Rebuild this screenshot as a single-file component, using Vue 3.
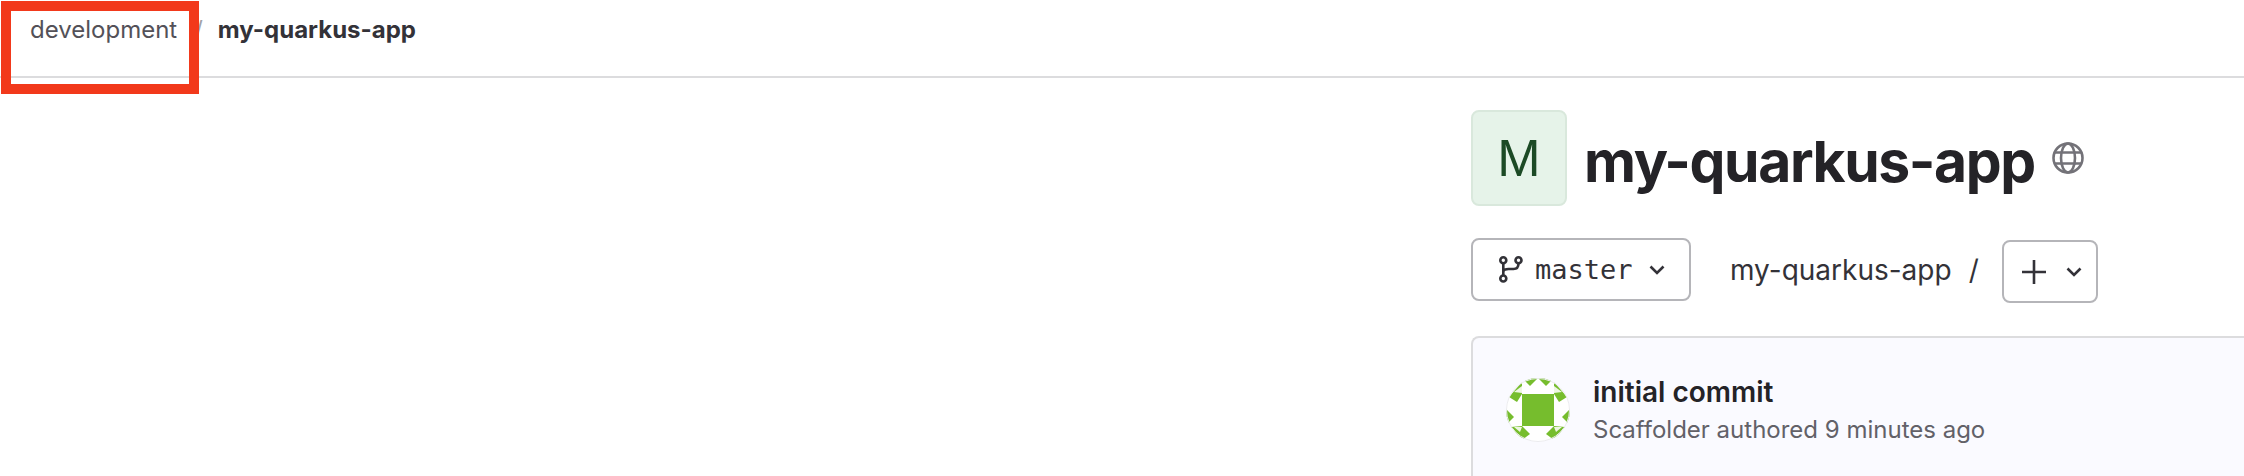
<template>
  <div class="page">
    <header class="topbar">
      <span class="crumb">development</span>
      <span class="crumb-sep">/</span>
      <strong class="crumb-current">my-quarkus-app</strong>
    </header>
    <div class="highlight"></div>

    <main class="content">
      <div class="project-title">
        <div class="project-avatar">M</div>
        <h1>my-quarkus-app</h1>
        <svg class="globe" viewBox="0 0 32 32" fill="none">
          <circle cx="16" cy="16" r="14.5" />
          <ellipse cx="16" cy="16" rx="7" ry="14.5" />
          <path d="M3 10.5h26M3 21.5h26" />
        </svg>
      </div>

      <div class="toolbar">
        <button class="btn btn-branch" type="button">
          <svg class="branch-icon" viewBox="0 0 24 27" fill="none">
            <circle cx="4.300" cy="4.300" r="3" />
            <circle cx="4.300" cy="22.500" r="3" />
            <circle cx="19.500" cy="4.300" r="3" />
            <path d="M4.300 7.300v12.200M19.500 7.300c0 3.500-1.500 5.700-5 5.700h-5c-3 0-5.200 1-5.200 3" />
          </svg>
          <span class="branch-name">master</span>
          <svg class="chevron" viewBox="0 0 16 10" fill="none"><path d="M1.500 1.500 8 8l6.500-6.500" /></svg>
        </button>
        <span class="path-name">my-quarkus-app</span>
        <span class="path-sep">/</span>
        <button class="btn btn-add" type="button">
          <svg class="plus" viewBox="0 0 24 24" fill="none"><path d="M12 0v24M0 12h24" /></svg>
          <svg class="chevron" viewBox="0 0 16 10" fill="none"><path d="M1.500 1.500 8 8l6.500-6.500" /></svg>
        </button>
      </div>

      <section class="commit">
        <svg class="identicon" viewBox="0 0 64 64">
          <defs>
            <clipPath id="round"><circle cx="32" cy="32" r="32" /></clipPath>
          </defs>
          <g clip-path="url(#round)">
            <rect width="64" height="64" fill="#fff" />
            <g fill="#76bd2d">
              <rect x="16" y="16" width="32" height="32" />
              <polygon v-for="(shape, i) in shapes" :key="i" :points="shape" />
            </g>
            <g fill="#eef6e3">
              <polygon v-for="(shape, i) in wedges" :key="i" :points="shape" />
            </g>
          </g>
          <circle cx="32" cy="32" r="31.5" fill="none" stroke="#ececef" />
        </svg>
        <div class="commit-text">
          <div class="commit-title">initial commit</div>
          <div class="commit-meta">Scaffolder authored 9 minutes ago</div>
        </div>
      </section>
    </main>
  </div>
</template>

<script setup>
const shapes = [
  '16,0 32,0 24,8',
  '32,0 48,0 40,8',
  '16,4 3,19 11,24 16,16',
  '48,4 61,19 53,24 48,16',
  '0,31 8,39 0,47',
  '64,31 56,39 64,47',
  '16,48 24,56 16,62 5,49',
  '48,48 40,56 48,62 59,49'
]
const wedges = [
  '8,14 16,8 16,15',
  '56,14 48,8 48,15',
  '8,49 16,49 14,54',
  '56,49 48,49 50,54'
]
</script>

<style>
html, body {
  margin: 0;
  background: #fff;
}
</style>

<style scoped>
.page {
  position: relative;
  width: 2244px;
  height: 476px;
  overflow: hidden;
  font-family: Inter, "Noto Sans", sans-serif;
  color: #333238;
}

.topbar {
  display: flex;
  align-items: flex-start;
  height: 78px;
  padding: 15px 0 0 30px;
  box-sizing: border-box;
  border-bottom: 2px solid #dcdcde;
  font-size: 24px;
  line-height: 30px;
}

.crumb {
  color: #535158;
}

.crumb-sep {
  margin-left: 17px;
  color: #a4a3a8;
}

.crumb-current {
  margin-left: 15px;
  font-weight: 700;
}

.highlight {
  position: absolute;
  left: 1px;
  top: 1px;
  width: 178px;
  height: 73px;
  border: 10px solid #f2391b;
}

.content {
  padding: 32px 0 0 1471px;
}

.project-title {
  display: flex;
  align-items: center;
  height: 96px;
}

.project-avatar {
  display: flex;
  align-items: center;
  justify-content: center;
  width: 96px;
  height: 96px;
  box-sizing: border-box;
  border: 2px solid #d9e8dc;
  border-radius: 8px;
  background: #e6f3e9;
  color: #1c4a25;
  font-family: "Liberation Sans", Arial, sans-serif;
  font-size: 52px;
}

h1 {
  margin: 8px 0 0 17px;
  color: #242327;
  font-size: 57px;
  line-height: 70px;
  font-weight: 700;
  letter-spacing: -1.4px;
}

.globe {
  width: 32px;
  height: 32px;
  margin-left: 17px;
  stroke: #737278;
  stroke-width: 2.6;
}

.toolbar {
  display: flex;
  align-items: center;
  height: 63px;
  margin-top: 32px;
}

.btn {
  display: flex;
  align-items: center;
  flex: none;
  box-sizing: border-box;
  height: 63px;
  padding: 0;
  border: 2px solid #b5b5b9;
  border-radius: 8px;
  background: #fff;
  color: #333238;
}

.btn-branch {
  width: 220px;
  padding-left: 26px;
}

.branch-icon {
  width: 24px;
  height: 27px;
  stroke: #333238;
  stroke-width: 2.6;
}

.branch-name {
  margin-left: 12px;
  font-family: "DejaVu Sans Mono", "Liberation Mono", monospace;
  font-size: 27px;
}

.chevron {
  width: 16px;
  height: 10px;
  stroke: #333238;
  stroke-width: 2.6;
}

.btn-branch .chevron {
  margin-left: 16px;
}

.path-name {
  margin-left: 39px;
  font-size: 28px;
}

.path-sep {
  margin-left: 17px;
  font-size: 28px;
}

.btn-add {
  width: 96px;
  margin: 4px 0 0 23px;
  padding-left: 18px;
}

.plus {
  width: 24px;
  height: 24px;
  stroke: #333238;
  stroke-width: 2.6;
}

.btn-add .chevron {
  margin-left: 20px;
}

.commit {
  display: flex;
  align-items: flex-start;
  height: 200px;
  margin-top: 35px;
  padding: 40px 0 0 33px;
  box-sizing: border-box;
  border: 2px solid #dcdcde;
  border-right: 0;
  border-radius: 8px 0 0 0;
  background: #fafaff;
}

.identicon {
  width: 64px;
  height: 64px;
  flex: none;
}

.commit-text {
  margin-left: 23px;
}

.commit-title {
  color: #242327;
  font-size: 28px;
  line-height: 30px;
  font-weight: 600;
  margin-top: -1px;
}

.commit-meta {
  margin-top: 8px;
  color: #626168;
  font-size: 24px;
  line-height: 30px;
}
</style>
